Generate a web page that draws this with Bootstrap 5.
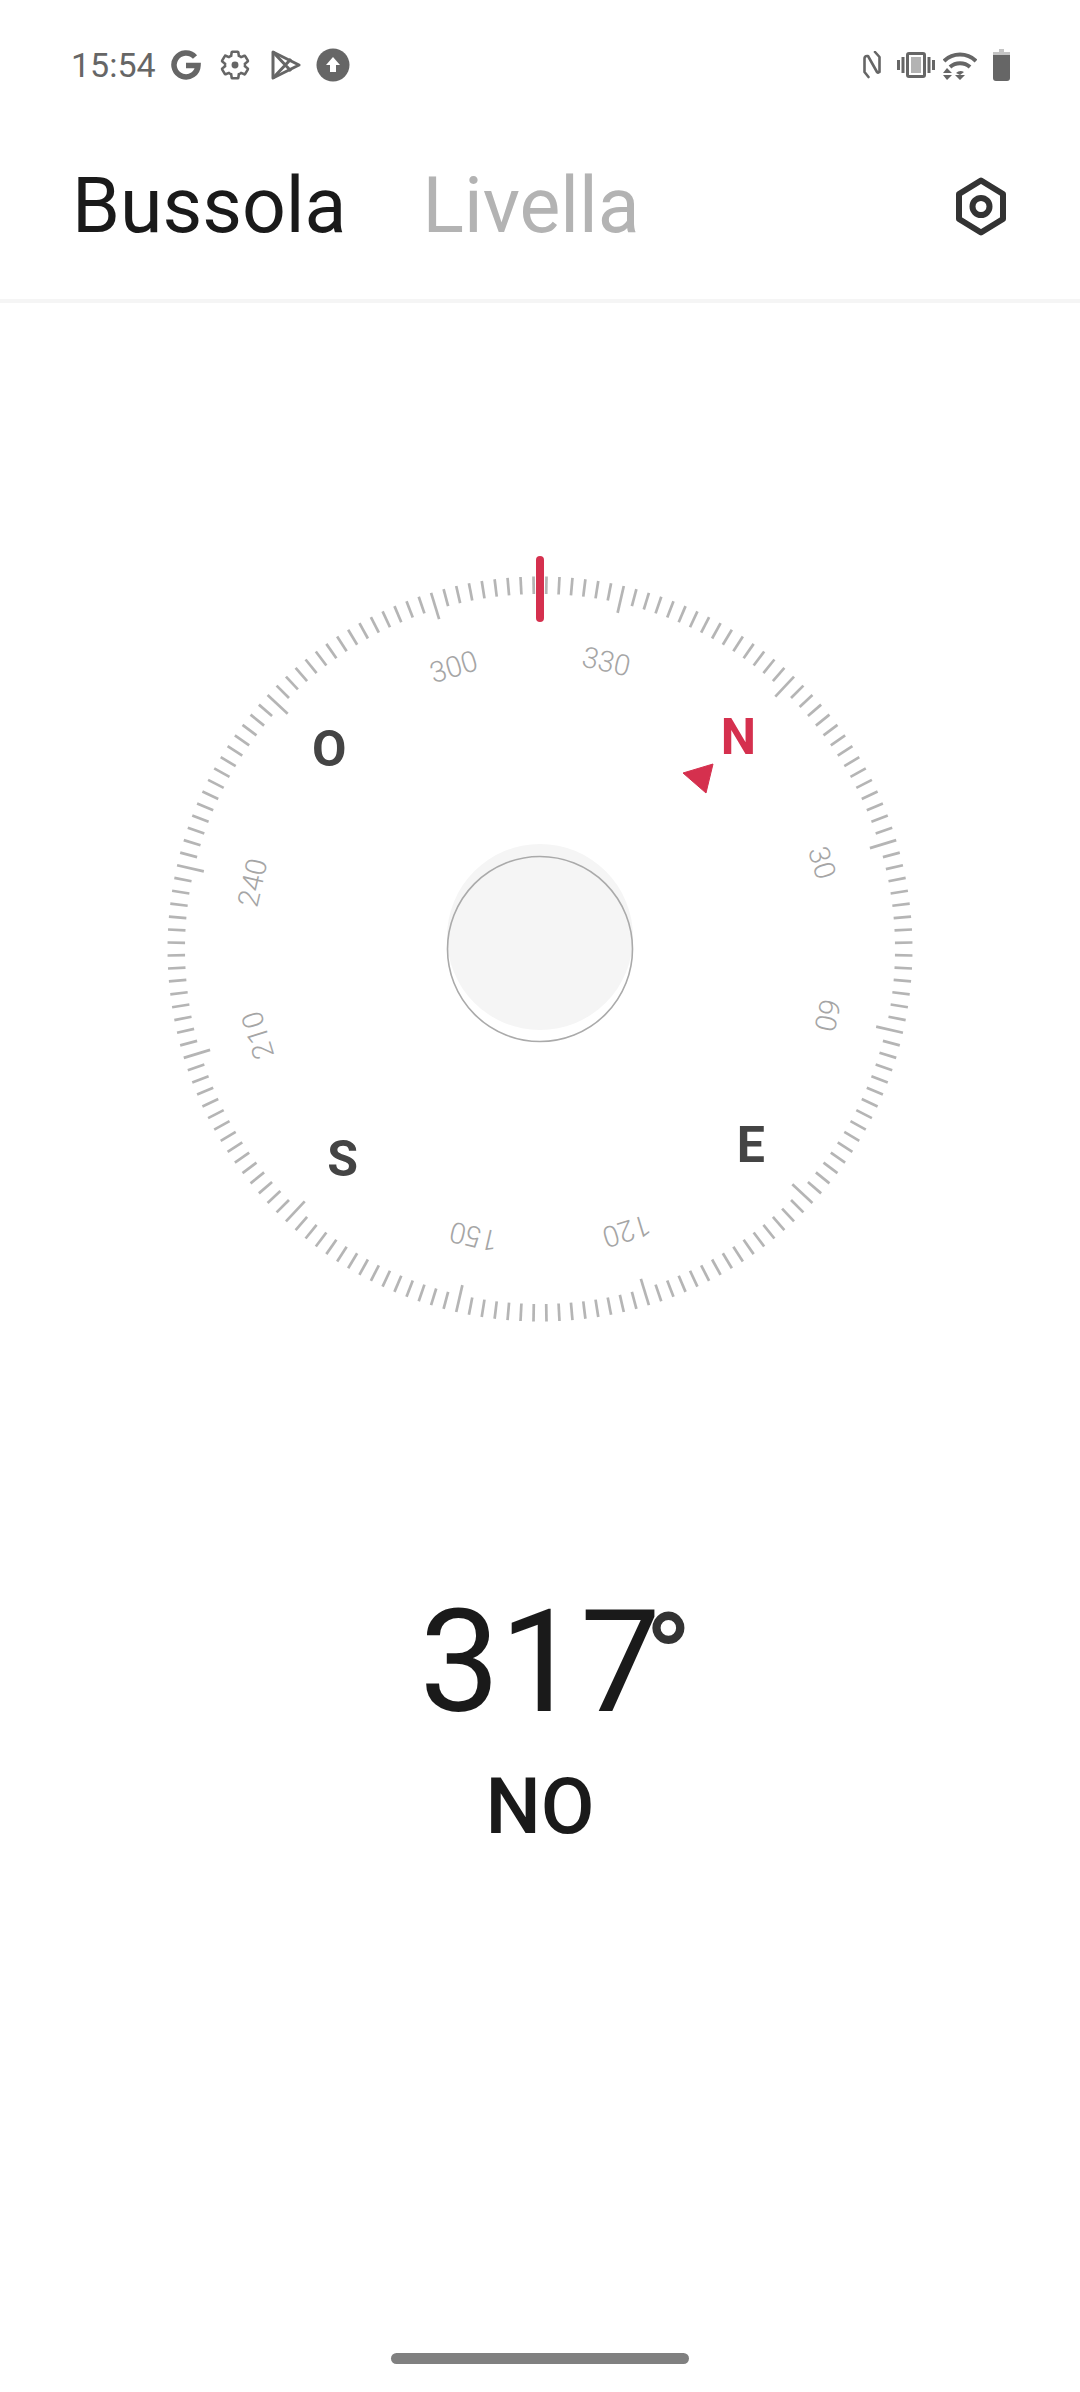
<!DOCTYPE html>
<html lang="it">
<head>
  <meta charset="UTF-8" />
  <meta name="viewport" content="width=device-width, initial-scale=1.0">
  <title>Bussola</title>
  <link href="https://cdn.jsdelivr.net/npm/bootstrap@5.3.3/dist/css/bootstrap.min.css" rel="stylesheet">
  <style>
    html, body { height: 100%; }
    body { background: #fff; font-family: Roboto, "Liberation Sans", sans-serif; }
    .schermo { width: 1080px; height: 2392px; overflow: hidden; }
    .barra-stato { height: 130px; padding: 0 70px 0 71px; color: #666; }
    .ora { font-size: 34px; line-height: 1; width: 100px; }
    .ico-stato { display: block; flex: none; }
    .spazio-18 { margin-left: 18px; }
    .spazio-20 { margin-left: 20px; }
    .spazio-15 { margin-left: 15px; }
    .testata { height: 173px; padding: 0 74px 17px 72px; border-bottom: 4px solid #f5f5f5; }
    .tab-attiva, .tab-spenta { font-size: 77px; line-height: 1; font-weight: 400; }
    .tab-attiva { color: #1a1a1a; }
    .tab-spenta { color: #b3b3b3; margin-left: 76px; }
    .quadrante { width: 800px; height: 800px; margin-top: 246px; display: block; flex: none; }
    .tacca { stroke: #b5b5b5; stroke-width: 2.7; }
    .tacca-rossa { stroke: #d5304e; stroke-width: 8; stroke-linecap: round; }
    .num-grado { font-size: 29px; font-weight: 300; fill: #a5a5a5; text-anchor: middle; }
    .cardinale { font-size: 50px; font-weight: 700; fill: #444; text-anchor: middle; }
    .cardinale-n { fill: #d5304e; }
    .gradi { font-size: 143px; line-height: 1; color: #1a1a1a; font-weight: 400; margin-top: 242px; }
    .cifre { position: relative; display: inline-block; }
    .simbolo-grado { position: absolute; left: 100%; top: 5px; margin-left: -16px; font-size: 125px; line-height: 1; color: #333; font-weight: 500; }
    .direzione { font-size: 78px; line-height: 1; color: #1a1a1a; font-weight: 500; margin-top: 34px; }
    .barra-home { width: 298px; height: 11px; background: #808080; border-radius: 6px; margin-bottom: 28px; }
  </style>
</head>
<body>
  <div class="schermo d-flex flex-column">
    <div class="barra-stato d-flex align-items-center">
      <span class="ora">15:54</span>
      <svg class="ico-stato" width="30" height="30" viewBox="0 0 30 30" fill="none" stroke="#666" stroke-width="5.5"><path d="M24 7A12 12 0 1 0 27 15.5H15"/></svg>
      <svg class="ico-stato spazio-18" width="32" height="32" viewBox="0 0 24 24" fill="none" stroke="#666" stroke-width="1.9"><path d="M19.43 12.98c.04-.32.07-.64.07-.98 0-.34-.03-.66-.07-.98l2.11-1.65c.19-.15.24-.42.12-.64l-2-3.46c-.12-.22-.39-.3-.61-.22l-2.49 1c-.52-.4-1.08-.73-1.69-.98l-.38-2.65C14.46 2.18 14.25 2 14 2h-4c-.25 0-.46.18-.49.42l-.38 2.65c-.61.25-1.17.59-1.69.98l-2.49-1c-.23-.09-.49 0-.61.22l-2 3.46c-.13.22-.07.49.12.64l2.11 1.65c-.04.32-.07.65-.07.98 0 .33.03.66.07.98l-2.11 1.65c-.19.15-.24.42-.12.64l2 3.46c.12.22.39.3.61.22l2.49-1c.52.4 1.08.73 1.69.98l.38 2.65c.03.24.24.42.49.42h4c.25 0 .46-.18.49-.42l.38-2.65c.61-.25 1.17-.59 1.69-.98l2.49 1c.23.09.49 0 .61-.22l2-3.46c.12-.22.07-.49-.12-.64l-2.11-1.65z"/><circle cx="12" cy="12" r="2.6" fill="#666" stroke="none"/></svg>
      <svg class="ico-stato spazio-20" width="30" height="32" viewBox="0 0 30 32" fill="none" stroke="#666" stroke-width="3" stroke-linejoin="round"><path d="M2 3L28 16L2 29Z"/><path d="M2 3L20 22M2 29L20 10"/></svg>
      <svg class="ico-stato spazio-15" width="34" height="34" viewBox="0 0 34 34"><circle cx="17" cy="17" r="16.5" fill="#666"/><path d="M17 9L24 17H20V24H14V17H10Z" fill="#fff"/></svg>
      <svg class="ico-stato ms-auto" width="18" height="28" viewBox="0 0 18 28" fill="none" stroke="#666" stroke-width="2.6" stroke-linecap="round" stroke-linejoin="round"><path d="M5.5 26L1.5 21V7.5Q1.5 5 4 5H5L14 21Q15 22 16 21L16.5 21V6L12 1"/></svg>
      <svg class="ico-stato ms-3" width="38" height="26" viewBox="0 0 38 26" fill="none" stroke="#666"><rect x="10.5" y="1.5" width="17" height="23" rx="1.5" stroke-width="3"/><rect x="14" y="5" width="10" height="16" fill="#b3b3b3" stroke="none"/><path d="M1.5 8V18M6 5V21M32 5V21M36.5 8V18" stroke-width="3"/></svg>
      <svg class="ico-stato ms-2" width="34" height="30" viewBox="0 0 34 30"><path d="M1 11A23 23 0 0 1 33 11" fill="none" stroke="#666" stroke-width="4"/><path d="M7 17A15 15 0 0 1 27 17" fill="none" stroke="#666" stroke-width="4"/><path d="M13 23A7 7 0 0 1 21 22L17 25" fill="#666"/><path d="M4 18L9 23H0Z M0 25H9L4 30Z M17 30L12 25H22Z" fill="#666"/></svg>
      <svg class="ico-stato ms-3" width="17" height="34" viewBox="0 0 17 34"><path d="M6 1H11V4H17V7H0V4H6Z" fill="#c4c4c4"/><path d="M0 7H17V30A3 3 0 0 1 14 33H3A3 3 0 0 1 0 30Z" fill="#666"/></svg>
    </div>

    <div class="testata d-flex align-items-center">
      <span class="tab-attiva">Bussola</span>
      <span class="tab-spenta">Livella</span>
      <svg class="ms-auto" width="50" height="59" viewBox="0 0 50 59" fill="none" stroke="#333" stroke-linejoin="round"><path d="M25 3.5L47 17V42L25 55.5L3 42V17Z" stroke-width="6"/><circle cx="25" cy="29.5" r="8.5" stroke-width="6"/></svg>
    </div>

    <svg class="quadrante mx-auto" id="quadrante" viewBox="-400 -400 800 800"></svg>

    <div class="gradi text-center"><span class="cifre">317<span class="simbolo-grado">°</span></span></div>
    <div class="direzione text-center">NO</div>

    <div class="barra-home mx-auto mt-auto"></div>
  </div>

<script src="https://cdn.jsdelivr.net/npm/bootstrap@5.3.3/dist/js/bootstrap.bundle.min.js"></script>
<script>
// Disegna il quadrante: tacche ogni 2 gradi, numeri ogni 30
const rotta = 317;
const svg = document.getElementById("quadrante");
let html = "";

const polare = (gradi, r) => {
  const a = (gradi - rotta) * Math.PI / 180;
  return [r * Math.sin(a), -r * Math.cos(a)];
};

html += `<circle cx="0" cy="-12" r="93" fill="#f5f5f5"/>`;
html += `<circle cx="0" cy="0" r="92.5" fill="none" stroke="#aaa" stroke-width="1.6"/>`;

for (let g = 0; g < 360; g += 2) {
  const [x1, y1] = polare(g, 372.5);
  const [x2, y2] = polare(g, g % 30 === 0 ? 345 : 355);
  html += `<line class="tacca" x1="${x1}" y1="${y1}" x2="${x2}" y2="${y2}"/>`;
}

[30, 60, 120, 150, 210, 240, 300, 330].forEach(g => {
  const [x, y] = polare(g, 295);
  html += `<text class="num-grado" x="${x}" y="${y + 10}" transform="rotate(${g - rotta} ${x} ${y})">${g}</text>`;
});

// le lettere restano dritte, dx e dy sono ritocchi a occhio
[["N", 0, 0, 0], ["E", 90, -2, -3], ["S", 180, 1, -4], ["O", 270, 2, -3]].forEach(([lettera, g, dx, dy]) => {
  const [x, y] = polare(g, 291);
  const extra = lettera === "N" ? " cardinale-n" : "";
  html += `<text class="cardinale${extra}" x="${x + dx}" y="${y + 18 + dy}">${lettera}</text>`;
});

html += `<polygon points="143,-176 173,-185 166,-156" fill="#d5304e" stroke="#d5304e" stroke-width="1" stroke-linejoin="round"/>`;
html += `<line class="tacca-rossa" x1="0" y1="-389" x2="0" y2="-331"/>`;

svg.innerHTML = html;
</script>
</body>
</html>
